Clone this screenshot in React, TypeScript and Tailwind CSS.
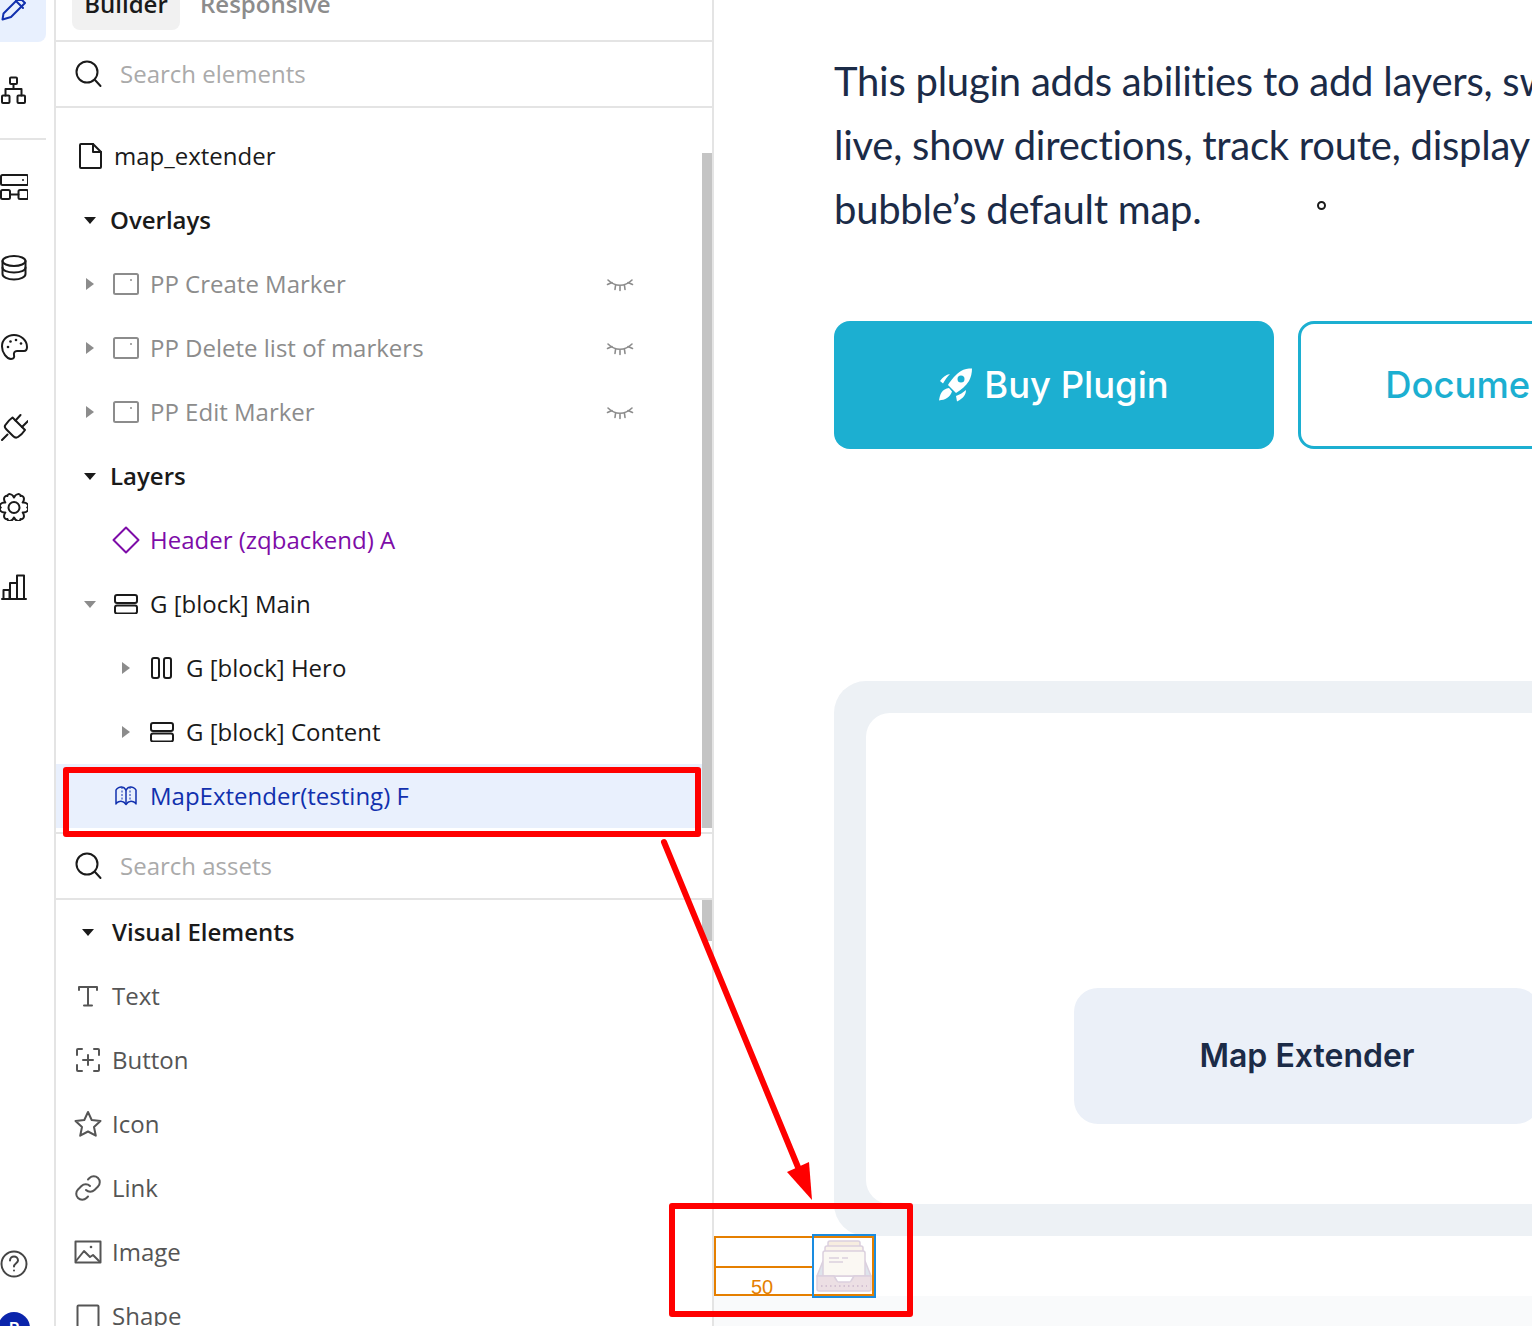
import React from "react";

const Ico = ({ w = 28, h = 28, className = "", children }: { w?: number; h?: number; className?: string; children: React.ReactNode }) => (
  <svg width={w} height={h} viewBox={`0 0 ${w} ${h}`} fill="none" stroke="currentColor" strokeWidth={2} strokeLinecap="round" strokeLinejoin="round" className={`shrink-0 ${className}`}>
    {children}
  </svg>
);

const gearPath = (() => {
  const cx = 14, cy = 14.5;
  const pt = (r: number, deg: number) => {
    const a = (deg * Math.PI) / 180;
    return `${(cx + r * Math.cos(a)).toFixed(2)} ${(cy + r * Math.sin(a)).toFixed(2)}`;
  };
  let d = `M${pt(10, -30)}`;
  for (let i = 0; i < 6; i++) {
    const a = i * 60;
    d += ` C${pt(14.5, a - 22)} ${pt(15.5, a + 0 - 6)} ${pt(13.2, a)} C${pt(15.5, a + 6)} ${pt(14.5, a + 22)} ${pt(10, a + 30)}`;
  }
  return d + "Z";
})();

const SearchIco = () => (
  <Ico><circle cx="13" cy="12" r="10.500" /><path d="M21 20l5.500 6" /></Ico>
);
const Caret = ({ open, gray }: { open?: boolean; gray?: boolean }) => (
  <svg width="16" height="16" viewBox="0 0 16 16" className={`shrink-0 ${gray ? "text-[#8c8c8c]" : "text-[#1a1a1a]"}`} fill="currentColor">
    {open ? <path d="M2 5h12l-6 7z" /> : <path d="M4 2l8 6-8 6z" />}
  </svg>
);
const Popup = () => (
  <Ico w={26} h={22}><rect x="1" y="1" width="24" height="20" rx="1.500" /><circle cx="18" cy="7" r="1" fill="currentColor" stroke="none" /></Ico>
);
const Lash = () => (
  <svg width="28" height="16" viewBox="0 0 28 16" fill="none" stroke="#8c8c8c" strokeWidth="1.600" strokeLinecap="round" className="shrink-0 mt-[3px]">
    <path d="M2 2C9 9 19 9 26 2" /><path d="M1.500 6.500L6 4.500M26.500 6.500L22 4.500M9.500 7.500L9 11.500M14 8.500v4M18.500 7.500l.5 4" />
  </svg>
);
const Stack = () => (
  <Ico w={26} h={20} className="text-[#1a1a1a]"><rect x="2" y="1" width="22" height="8" rx="2" /><rect x="2" y="11.500" width="22" height="8" rx="2" /></Ico>
);
const Cols = () => (
  <Ico w={24} h={24} className="text-[#1a1a1a]"><rect x="2" y="2" width="7" height="20" rx="2" /><rect x="14" y="2" width="7" height="20" rx="2" /></Ico>
);

const Row = ({ children, className = "" }: { children: React.ReactNode; className?: string }) => (
  <div className={`h-16 flex items-center text-2xl whitespace-nowrap ${className}`}>{children}</div>
);

const PopupRow = ({ label }: { label: string }) => (
  <Row className="text-[#8c8c8c] pl-[26px]">
    <Caret gray />
    <span className="ml-[15px] w-[26px] flex"><Popup /></span>
    <span className="ml-[11px] w-[456px]">{label}</span>
    <Lash />
  </Row>
);

const Asset = ({ icon, label }: { icon: React.ReactNode; label: string }) => (
  <Row className="text-[#555] pl-[18px]">
    <span className="w-[28px] flex justify-center">{icon}</span>
    <span className="ml-[10px]">{label}</span>
  </Row>
);

const RailIcon = ({ children }: { children: React.ReactNode }) => (
  <div className="h-20 flex items-center text-[#1a1a1a]">{children}</div>
);

export default function App() {
  return (
    <div className="relative w-[1532px] h-[1326px] overflow-hidden flex bg-white font-['Open_Sans',sans-serif]">
      {/* Rail */}
      <aside className="w-[56px] h-full shrink-0 border-r-2 border-[#e4e4e4] flex flex-col">
        <div className="h-[42px] w-[46px] bg-[#e8f0fe] rounded-br-lg overflow-hidden text-[#1130ae]">
          <Ico w={30} h={24} className="-mt-[2px]">
            <path d="M2.500 21.500l1-6L17 2l5 0 3 3-14 14z" /><path d="M16 3l7 7" />
          </Ico>
        </div>
        <div className="h-[96px] flex items-center text-[#1a1a1a]">
          <Ico>
            <rect x="10" y="1.500" width="7" height="6.500" rx="1" /><rect x="2" y="19.500" width="7.500" height="7.500" rx="1" /><rect x="17.500" y="19.500" width="7.500" height="7.500" rx="1" />
            <path d="M13.500 8v5M5.500 19.500V13h16v6.500" />
          </Ico>
        </div>
        <div className="h-[2px] w-[46px] bg-[#e4e4e4]" />
        <div className="pt-[7px] flex flex-col">
          <RailIcon>
            <Ico>
              <rect x="1" y="2" width="27" height="10" rx="1.500" /><rect x="1" y="17" width="9" height="9" rx="1.500" /><rect x="18.500" y="17" width="9.500" height="9" rx="1.500" />
              <path d="M10 21.500h8.500" /><circle cx="23" cy="7" r="1" fill="currentColor" stroke="none" />
            </Ico>
          </RailIcon>
          <RailIcon>
            <Ico>
              <ellipse cx="14" cy="8" rx="11.500" ry="5" /><path d="M2.500 8v13c0 3 5 5.500 11.500 5.500s11.500-2.500 11.500-5.500V8" /><path d="M2.500 14.500c0 3 5 5 11.500 5s11.500-2 11.500-5" />
            </Ico>
          </RailIcon>
          <RailIcon>
            <Ico>
              <path d="M14 2C7 2 2 7 2 13.500 2 20 7 26 11 26c3 0 3.500-2 3-4-.5-2 .5-4 3-4h7c2 0 3-2 3-4 0-6.500-6-12-13-12z" />
              <circle cx="8" cy="14" r="1.300" fill="currentColor" stroke="none" /><circle cx="10.500" cy="8.500" r="1.300" fill="currentColor" stroke="none" /><circle cx="16" cy="7" r="1.300" fill="currentColor" stroke="none" /><circle cx="21" cy="10.500" r="1.300" fill="currentColor" stroke="none" />
            </Ico>
          </RailIcon>
          <RailIcon>
            <Ico>
              <path d="M12.500 4.500L25 17c-2 3-4 5-7 7-1.500 1-3.500.5-5-1l-6.500-6.500C5 15 4.500 13.500 5 12.500c2-3 4.500-6 7.500-8z" />
              <path d="M15.500 7.500L20.500 2M22 14l6-6M2 27l5.500-5.500" />
            </Ico>
          </RailIcon>
          <RailIcon>
            <Ico>
              <path d={gearPath} /><circle cx="14" cy="14.500" r="5.500" />
            </Ico>
          </RailIcon>
          <RailIcon>
            <Ico>
              <path d="M2 26h24" /><rect x="3.500" y="17" width="6" height="9" /><rect x="10" y="10" width="7" height="16" /><rect x="17" y="2.500" width="7" height="23.500" />
            </Ico>
          </RailIcon>
        </div>
        <div className="flex-1 flex flex-col justify-end">
          <div className="mb-[34px] text-[#444]">
            <Ico>
              <circle cx="14" cy="14" r="12.500" /><path d="M10 10.500c0-2.500 2-4 4-4s4 1.500 4 4-4 3-4 6" /><circle cx="14" cy="20.500" r="1" fill="currentColor" stroke="none" />
            </Ico>
          </div>
          <div className="h-[14px] w-[30px] overflow-hidden">
            <div className="w-8 h-8 -ml-[2px] rounded-full bg-[#0b25ab] text-white text-center text-lg font-semibold leading-8">P</div>
          </div>
        </div>
      </aside>

      {/* Panel */}
      <section className="w-[658px] h-full shrink-0 border-r-2 border-[#e4e4e4] flex flex-col">
        <div className="h-[42px] shrink-0 border-b-2 border-[#e4e4e4] pl-4 flex items-end pb-[10px] gap-5 text-2xl font-semibold overflow-hidden">
          <div className="w-[108px] h-[44px] bg-[#f1f1f1] rounded-lg text-center text-[#1a1a1a] leading-[36px]">Builder</div>
          <div className="text-[#8c8c8c] h-[44px] leading-[36px]">Responsive</div>
        </div>
        <div className="h-[66px] shrink-0 border-b-2 border-[#e4e4e4] pl-[18px] flex items-center text-2xl">
          <span className="text-[#1a1a1a] flex"><SearchIco /></span>
          <span className="ml-[18px] text-[#aaaaaa]">Search elements</span>
        </div>
        <div className="h-[726px] shrink-0 border-b-2 border-[#e4e4e4] flex">
          <div className="flex-1 min-w-0 pt-4">
            <Row className="text-[#1a1a1a] pl-[22px]">
              <Ico w={24} h={26}><path d="M3 1h12l8 8v15a1 1 0 0 1-1 1H3a1 1 0 0 1-1-1V2a1 1 0 0 1 1-1z" /><path d="M15 1v8h8" /></Ico>
              <span className="ml-[12px]">map_extender</span>
            </Row>
            <Row className="text-[#1a1a1a] font-semibold pl-[26px]">
              <Caret open /><span className="ml-3">Overlays</span>
            </Row>
            <PopupRow label="PP Create Marker" />
            <PopupRow label="PP Delete list of markers" />
            <PopupRow label="PP Edit Marker" />
            <Row className="text-[#1a1a1a] font-semibold pl-[26px]">
              <Caret open /><span className="ml-3">Layers</span>
            </Row>
            <Row className="text-[#7d0ca8] pl-[56px]">
              <Ico><path d="M14 1.500L26.500 14 14 26.500 1.500 14z" /></Ico>
              <span className="ml-[10px]">Header (zqbackend) A</span>
            </Row>
            <Row className="text-[#1a1a1a] pl-[26px]">
              <Caret open gray /><span className="ml-[15px] flex"><Stack /></span><span className="ml-[11px]">G [block] Main</span>
            </Row>
            <Row className="text-[#1a1a1a] pl-[62px]">
              <Caret gray /><span className="ml-4 flex"><Cols /></span><span className="ml-3">G [block] Hero</span>
            </Row>
            <Row className="text-[#1a1a1a] pl-[62px]">
              <Caret gray /><span className="ml-[15px] flex"><Stack /></span><span className="ml-[11px]">G [block] Content</span>
            </Row>
            <Row className="bg-[#e9f0fd] text-[#1130ae] pl-[58px]">
              <svg width="24" height="22" viewBox="0 0 24 22" fill="none" stroke="currentColor" strokeWidth="1.500" strokeLinejoin="round" className="shrink-0">
                <path d="M2 5c1-2 4-3.500 6-3 2 0 3 1.500 4 3 1-1.500 2-3 4-3 2-.5 5 1 6 3v14c-1-2-4-3-6-2.500-2 0-3 1.500-4 3-1-1.500-2-3-4-3-2-.5-5 .5-6 2.500z" />
                <path d="M8 2v14M16 2v14" strokeDasharray="2 1.500" strokeWidth="1" /><path d="M12 5v14" />
              </svg>
              <span className="ml-[12px]">MapExtender(testing) F</span>
            </Row>
          </div>
          <div className="w-[10px] shrink-0 pt-[45px] pb-1">
            <div className="h-full bg-[#c4c4c4]" />
          </div>
        </div>
        <div className="h-[66px] shrink-0 border-b-2 border-[#e4e4e4] pl-[18px] flex items-center text-2xl">
          <span className="text-[#1a1a1a] flex"><SearchIco /></span>
          <span className="ml-[18px] text-[#aaaaaa]">Search assets</span>
        </div>
        <div className="flex flex-1 min-h-0">
          <div className="flex-1 min-w-0">
            <Row className="text-[#1a1a1a] font-semibold pl-6">
              <Caret open /><span className="ml-4">Visual Elements</span>
            </Row>
            <Asset label="Text" icon={<Ico w={22} h={22}><path d="M2 5V2h18v3M11 2v18M7 20.500h8" /></Ico>} />
            <Asset label="Button" icon={<Ico w={26} h={26}><path d="M2 8V3a1 1 0 0 1 1-1h4M19 2h4a1 1 0 0 1 1 1v5M24 18v5a1 1 0 0 1-1 1h-4M7 24H3a1 1 0 0 1-1-1v-5M13 8v10M8 13h10" /></Ico>} />
            <Asset label="Icon" icon={<Ico><path d="M14 2l3.700 8 8.800 1-6.500 6 1.800 8.700L14 21.500l-7.800 4.200L8 17l-6.500-6 8.800-1z" /></Ico>} />
            <Asset label="Link" icon={<Ico w={26} h={26}><path d="M11 15a6 6 0 0 0 8.500 0l3.500-3.500a6 6 0 0 0-8.500-8.500l-1.500 1.500" /><path d="M15 11a6 6 0 0 0-8.500 0L3 14.500a6 6 0 0 0 8.500 8.500l1.500-1.500" /></Ico>} />
            <Asset label="Image" icon={<Ico h={24}><rect x="1.500" y="1.500" width="25" height="21" /><path d="M2 21l8-10 6 6 3-2 7 7" /><circle cx="17" cy="7" r="1.300" fill="currentColor" stroke="none" /></Ico>} />
            <Asset label="Shape" icon={<Ico w={24} h={24}><rect x="1.500" y="1.500" width="21" height="22" rx="1" /></Ico>} />
          </div>
          <div className="w-[10px] shrink-0">
            <div className="h-[41px] bg-[#c4c4c4]" />
          </div>
        </div>
      </section>

      {/* Content */}
      <main className="flex-1 min-w-0 h-full overflow-hidden pt-[49px] flex flex-col font-['Inter',sans-serif]">
        <div className="pl-[120px]">
          <div className="w-[1000px] font-['Lato',sans-serif] text-[40px] leading-[64px] tracking-[-0.25px] [font-variant-ligatures:none] text-[#1b2b47] whitespace-nowrap">
            <p>This plugin adds abilities to add layers, swap</p>
            <p>live, show directions, track route, display</p>
            <p>bubble’s default map.</p>
          </div>
          <div className="mt-20 flex gap-6 w-[1000px]">
            <div className="w-[440px] h-32 rounded-2xl bg-[#1cafd1] text-white text-[36.400px] font-medium flex items-center justify-center gap-[11px]">
              <svg width="34" height="34" viewBox="0 0 34 34" fill="currentColor" className="shrink-0">
                <path fillRule="evenodd" d="M33 .5c-4 0-8 .5-11 2.500-5 3-10 9-13 14l8 8c5-3 10-7 13-12 2-4 3-8 3-12.500zM22 7.500a3.500 3.500 0 1 0 0 7 3.500 3.500 0 0 0 0-7z" />
                <path d="M11 6C7 6.500 4 9 1 13l3 2.500C6 12 8 9 11 6zM27 22c0 4-2 8-9 11.500l-1-5.500c4-1.500 7-3.500 10-6zM10 20c-3 .5-6 2-7.500 4.500C1 26.500.5 29.500 0 32.500c3-.5 6-1 8-2.500 2.500-1.500 4-3.500 5-6.500z" />
              </svg>
              <span>Buy Plugin</span>
            </div>
            <div className="w-[440px] h-32 rounded-2xl border-[3px] border-[#1cafd1] text-[#1cafd1] text-[36.400px] font-medium flex items-center justify-center">
              Documentation
            </div>
          </div>
          <div className="mt-[232px] w-[1000px] h-[555px] rounded-[32px] bg-[#edf1f5] p-8">
            <div className="h-full rounded-3xl bg-white pt-[275px] pl-[208px]">
              <div className="w-[466px] h-[136px] rounded-3xl bg-[#ebf0f8] flex items-center justify-center text-[32px] font-semibold text-[#1b2b47]">
                Map Extender
              </div>
            </div>
          </div>
        </div>
        <div className="mt-[60px] flex-1 bg-[#f9fafb]" />
      </main>

      {/* Over-content items */}
      <div className="absolute left-[1317px] top-[201px] w-[9px] h-[9px] rounded-full border-2 border-[#1a1a1a]" />

      <div className="absolute left-[714px] top-[1236px] w-[160px] h-[60px] border-2 border-[#e57f00]">
        <div className="h-[30px] w-[97px] border-b-2 border-[#e57f00]" />
        <div className="w-[92px] text-center text-[#e57f00] text-xl leading-5 mt-[9px] font-['Liberation_Sans',sans-serif]">50</div>
      </div>
      <div className="absolute left-[812px] top-[1234px] w-16 h-16 border-2 border-[#1a8ce0] flex items-center justify-center">
        <svg width="56" height="54" viewBox="0 0 56 54" fill="none" strokeWidth="1.500" strokeLinejoin="round">
          <rect x="12" y="2" width="32" height="12" rx="2" fill="#f7ede0" stroke="#dbd0de" />
          <rect x="9" y="7" width="38" height="12" rx="2" fill="#f9f3ea" stroke="#dbd0de" />
          <path d="M1 37L7 22h42l6 15z" fill="#dfe4ec" stroke="#dbd0de" />
          <path d="M7 37V14a2 2 0 0 1 2-2h38a2 2 0 0 1 2 2v23z" fill="#fbf8f3" stroke="#dbd0de" />
          <path d="M13 19h10M26 19h6M13 23h14" stroke="#dbd0de" />
          <path d="M1 37h17l3 5a2 2 0 0 0 2 1h10a2 2 0 0 0 2-1l3-5h17v13a2 2 0 0 1-2 2H3a2 2 0 0 1-2-2z" fill="#ecdfe4" stroke="#dbd0de" />
          <path d="M5 47h46" stroke="#cbb8cc" strokeDasharray="1.500 3" />
        </svg>
      </div>

      <div className="absolute left-[63px] top-[767px] w-[638px] h-[70px] border-[6px] border-[#ff0000] rounded-[3px]" />
      <div className="absolute left-[669px] top-[1203px] w-[244px] h-[114px] border-[6px] border-[#ff0000] rounded-[3px]" />
      <svg className="absolute left-0 top-0" width="1532" height="1326" viewBox="0 0 1532 1326" fill="none">
        <path d="M664 842L800 1172" stroke="#ff0000" strokeWidth="6" strokeLinecap="round" />
        <path d="M812 1200L787 1172L809 1162z" fill="#ff0000" />
      </svg>
    </div>
  );
}
